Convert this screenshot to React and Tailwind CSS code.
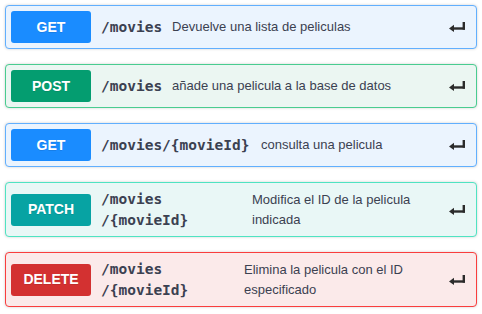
const ops = [
  {
    method: "GET",
    path: ["/movies"],
    desc: "Devuelve una lista de peliculas",
    card: "border-[#61affe] bg-[#ebf4fe]",
    badge: "bg-[#1a8cff]",
  },
  {
    method: "POST",
    path: ["/movies"],
    desc: "añade una pelicula a la base de datos",
    card: "border-[#49cc90] bg-[#ebf6f2]",
    badge: "bg-[#049d70]",
  },
  {
    method: "GET",
    path: ["/movies/{movieId}"],
    desc: "consulta una pelicula",
    card: "border-[#61affe] bg-[#ebf4fe]",
    badge: "bg-[#1a8cff]",
    pathW: "w-[170px]",
  },
  {
    method: "PATCH",
    path: ["/movies", "/{movieId}"],
    desc: "Modifica el ID de la pelicula indicada",
    card: "border-[#50e3c2] bg-[#e9f7f6]",
    badge: "bg-[#07a3a3]",
    pathW: "w-[161px]",
  },
  {
    method: "DELETE",
    path: ["/movies", "/{movieId}"],
    desc: "Elimina la pelicula con el ID especificado",
    card: "border-[#f93e3e] bg-[#fbeaea]",
    badge: "bg-[#d33131]",
    pathW: "w-[153px]",
  },
];

function EnterArrow() {
  return (
    <svg width="16" height="10" viewBox="0 0 16 10" className="shrink-0">
      <path d="M0 6.5 L5 2.8 L5 10 Z" fill="#2b2b2b" />
      <rect x="4" y="5.3" width="12" height="2.4" fill="#2b2b2b" />
      <rect x="13.6" y="0" width="2.4" height="7.7" fill="#2b2b2b" />
    </svg>
  );
}

function OpRow({ op }) {
  const twoLine = op.path.length > 1;
  return (
    <div
      className={`flex items-center rounded-[4px] border px-[5px] shadow-[0_0_3px_rgba(0,0,0,0.19)] ${op.card} ${
        twoLine ? "h-[55px]" : "h-[44px]"
      }`}
    >
      <div
        className={`flex h-[32px] w-[80px] shrink-0 items-center justify-center rounded-[3px] text-[14px] font-bold text-white [text-shadow:0_1px_0_rgba(0,0,0,0.1)] ${op.badge}`}
        style={{ fontFamily: "'Liberation Sans', Arial, sans-serif" }}
      >
        {op.method}
      </div>
      <div
        className={`shrink-0 px-[10px] text-[14.5px] font-bold leading-[21px] text-[#3b4151] ${
          op.pathW || ""
        }`}
        style={{ fontFamily: "'DejaVu Sans Mono', monospace" }}
      >
        {op.path.map((p) => (
          <div key={p}>{p}</div>
        ))}
      </div>
      <div
        className="flex-1 pr-[14px] text-[13px] leading-[20px] text-[#3b4151]"
        style={{ fontFamily: "'Liberation Sans', Arial, sans-serif" }}
      >
        {op.desc}
      </div>
      <div className="mr-[6px] flex items-center">
        <EnterArrow />
      </div>
    </div>
  );
}

export default function App() {
  return (
    <div className="flex h-[314px] w-[482px] flex-col gap-[15px] bg-white px-[5px] pt-[5px]">
      {ops.map((op, i) => (
        <OpRow key={i} op={op} />
      ))}
    </div>
  );
}
